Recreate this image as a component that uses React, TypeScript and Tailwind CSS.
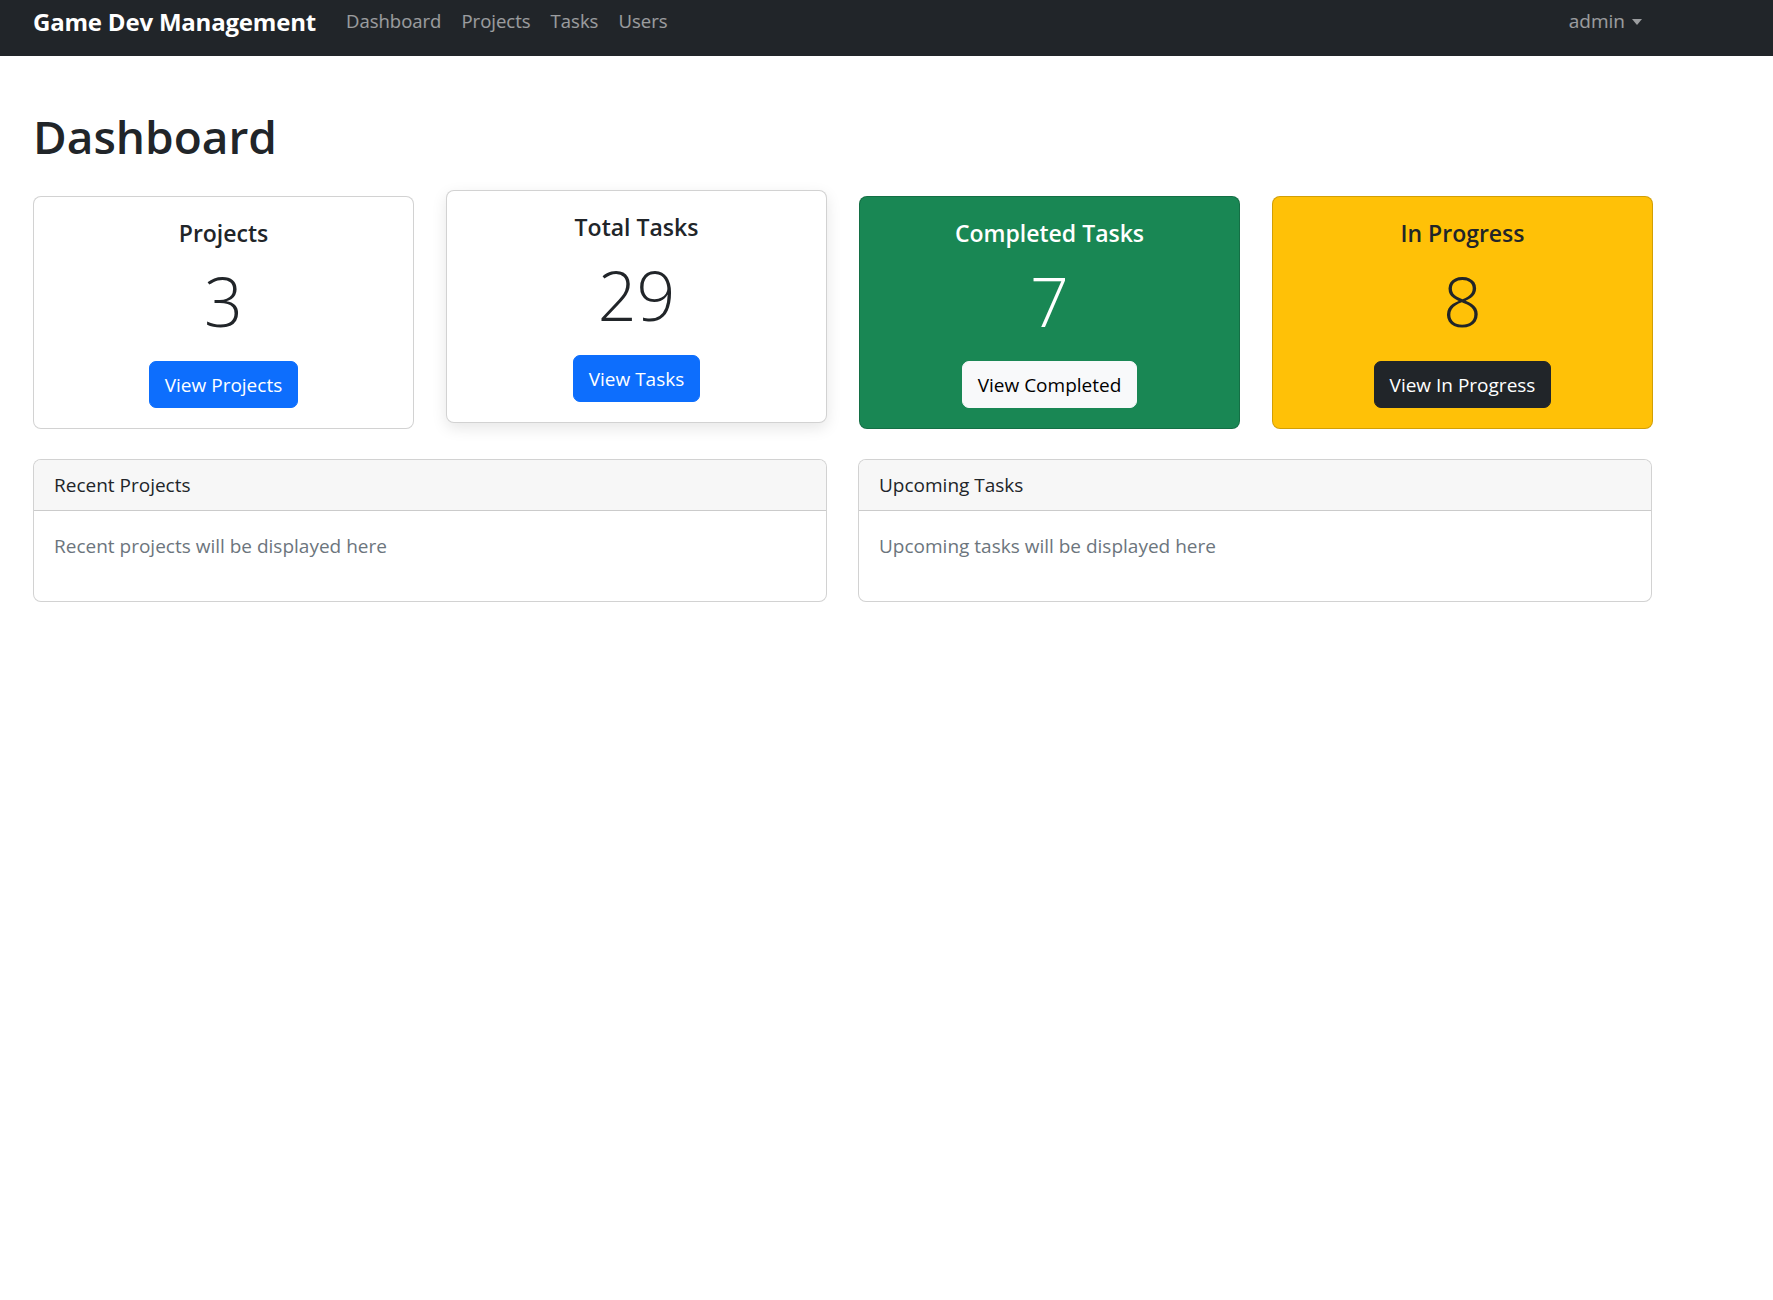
import { ReactNode } from "react";

type Stat = {
  title: string;
  value: number;
  action: string;
  card: string;
  button: string;
};

const stats: Stat[] = [
  {
    title: "Projects",
    value: 3,
    action: "View Projects",
    card: "bg-white text-[#212529]",
    button: "bg-[#0d6efd] border-[#0d6efd] text-white",
  },
  {
    title: "Total Tasks",
    value: 29,
    action: "View Tasks",
    card: "bg-white text-[#212529] -translate-y-[6px] shadow-[0_5px_15px_rgba(0,0,0,0.1)]",
    button: "bg-[#0d6efd] border-[#0d6efd] text-white",
  },
  {
    title: "Completed Tasks",
    value: 7,
    action: "View Completed",
    card: "bg-[#198754] text-white",
    button: "bg-[#f8f9fa] border-[#f8f9fa] text-black",
  },
  {
    title: "In Progress",
    value: 8,
    action: "View In Progress",
    card: "bg-[#ffc107] text-[#212529]",
    button: "bg-[#212529] border-[#212529] text-white",
  },
];

function StatCard({ stat }: { stat: Stat }) {
  return (
    <div
      className={`rounded-[8px] border border-black/[0.175] px-[20px] pb-[20px] pt-[21px] text-center ${stat.card}`}
    >
      <h5 className="mb-[11px] text-[23px] font-semibold leading-[30px]">
        {stat.title}
      </h5>
      <p className="mb-[18px] text-[68px] font-light leading-[84px]">
        {stat.value}
      </p>
      <button
        type="button"
        className={`inline-block rounded-[7px] border px-[15px] py-[7.5px] text-[19px] leading-[30px] ${stat.button}`}
      >
        {stat.action}
      </button>
    </div>
  );
}

function Panel({ title, children }: { title: string; children: ReactNode }) {
  return (
    <div className="overflow-hidden rounded-[8px] border border-black/[0.175] bg-white">
      <div className="border-b border-black/[0.175] bg-[#f7f7f7] px-[20px] py-[10px] text-[19px] leading-[30px] text-[#212529]">
        {title}
      </div>
      <div className="p-[20px]">
        <p className="mb-[20px] text-[19px] leading-[30px] text-[#6c757d]">
          {children}
        </p>
      </div>
    </div>
  );
}

export default function App() {
  return (
    <div className="min-h-screen bg-white font-['Open_Sans','Noto_Sans',sans-serif] text-[#212529]">
      <nav className="h-[56px] bg-[#212529]">
        <div className="ml-[33px] flex w-[1619px] items-start justify-between">
          <div className="flex items-start">
            <a
              href="#"
              className="mr-[20px] pt-[3px] text-[24px] font-bold leading-[37px] tracking-[-0.2px] text-white"
            >
              Game Dev Management
            </a>
            <ul className="flex pt-[6px]">
              {["Dashboard", "Projects", "Tasks", "Users"].map((item) => (
                <li key={item}>
                  <a
                    href="#"
                    className="block px-[10px] text-[18.5px] leading-[30px] text-white/55"
                  >
                    {item}
                  </a>
                </li>
              ))}
            </ul>
          </div>
          <a
            href="#"
            className="flex items-center gap-[7px] px-[10px] pt-[6px] text-[19px] leading-[30px] text-white/55"
          >
            admin
            <span className="mt-[2px] inline-block border-x-[5px] border-t-[6px] border-x-transparent border-t-white/55" />
          </a>
        </div>
      </nav>

      <main className="ml-[33px] w-[1620px]">
        <h1 className="mb-[30px] mt-[50px] text-[46px] font-semibold leading-[60px]">
          Dashboard
        </h1>

        <div className="grid grid-cols-4 gap-x-[32px]">
          {stats.map((s) => (
            <StatCard key={s.title} stat={s} />
          ))}
        </div>

        <div className="mt-[30px] grid grid-cols-2 gap-x-[31px] pr-px">
          <Panel title="Recent Projects">
            Recent projects will be displayed here
          </Panel>
          <Panel title="Upcoming Tasks">
            Upcoming tasks will be displayed here
          </Panel>
        </div>
      </main>
    </div>
  );
}
